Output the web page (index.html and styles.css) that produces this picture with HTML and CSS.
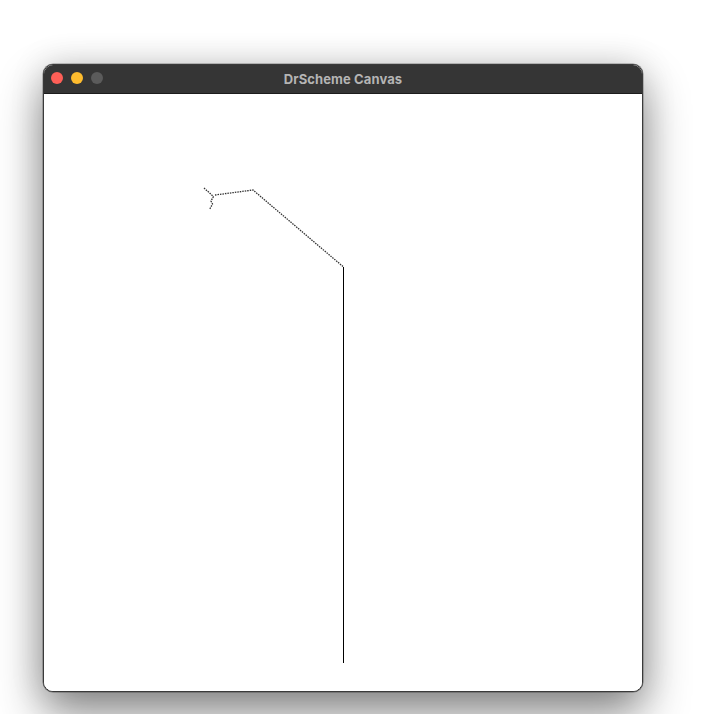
FILE: index.html
```html
<!DOCTYPE html>
<html>
<head>
<meta charset="utf-8">
<link rel="stylesheet" href="styles.css">
</head>
<body>
<div class="stage">
  <div class="window">
    <div class="titlebar">
      <div class="lights">
        <span class="light red"></span>
        <span class="light yellow"></span>
        <span class="light gray"></span>
      </div>
      <div class="title">DrScheme Canvas</div>
    </div>
    <div class="canvas">
      <svg class="drawing" width="598" height="598" viewBox="44 93 598 598">
        <g fill="none" stroke="#333" stroke-width="1.3" stroke-dasharray="1.5 1">
          <polyline points="204,187 213.5,195.5"/>
          <polyline points="213.5,195.5 211,200 212.5,203 209.5,208.5"/>
          <polyline points="215,194 253,189 343.5,266"/>
        </g>
        <line x1="343.5" y1="266" x2="343.5" y2="662" stroke="#000" stroke-width="1"/>
      </svg>
    </div>
  </div>
</div>
</body>
</html>
```
FILE: styles.css
```css
html, body {
  margin: 0;
  padding: 0;
  background: #ffffff;
  width: 722px;
  height: 714px;
  overflow: hidden;
}
.stage {
  padding: 64px 0 0 43px;
}
.window {
  width: 600px;
  height: 628px;
  border-radius: 10px;
  background: #ffffff;
  box-sizing: border-box;
  border: 1px solid #3a3a3a;
  box-shadow: 0 22px 46px rgba(0, 0, 0, 0.45), 0 0 34px rgba(0, 0, 0, 0.14), 0 0 0 0.5px rgba(0,0,0,0.4);
  overflow: hidden;
  display: flex;
  flex-direction: column;
}
.titlebar {
  height: 28px;
  background: #353535;
  border-bottom: 1px solid #1c1c1c;
  position: relative;
  display: flex;
  align-items: center;
  justify-content: center;
  flex: none;
}
.lights {
  position: absolute;
  left: 7px;
  top: 7px;
  display: flex;
  gap: 8px;
}
.light {
  width: 12px;
  height: 12px;
  border-radius: 50%;
  display: block;
}
.red { background: #fe5f57; }
.yellow { background: #febc2e; }
.gray { background: #5b5b5b; }
.title {
  font-family: "Inter", "Liberation Sans", sans-serif;
  font-weight: 700;
  font-size: 13px;
  color: #b4b4b4;
  letter-spacing: 0.1px;
}
.canvas {
  flex: 1;
  background: #ffffff;
}
.drawing {
  display: block;
}
```
